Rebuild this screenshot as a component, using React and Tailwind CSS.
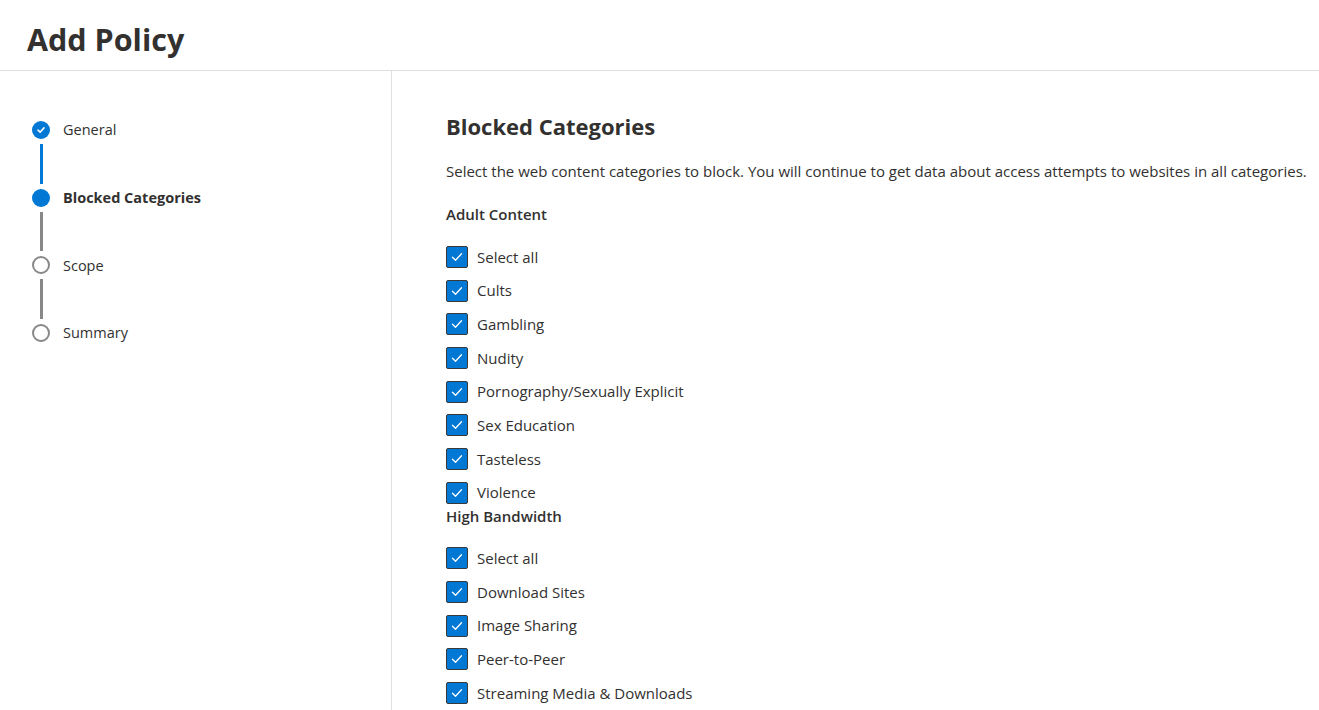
import React from "react";

const steps = [
  { label: "General", state: "done" },
  { label: "Blocked Categories", state: "current" },
  { label: "Scope", state: "todo" },
  { label: "Summary", state: "todo" },
];

const groups = [
  {
    title: "Adult Content",
    items: ["Select all", "Cults", "Gambling", "Nudity", "Pornography/Sexually Explicit", "Sex Education", "Tasteless", "Violence"],
  },
  {
    title: "High Bandwidth",
    items: ["Select all", "Download Sites", "Image Sharing", "Peer-to-Peer", "Streaming Media & Downloads"],
  },
];

function StepIcon({ state }) {
  if (state === "done") {
    return (
      <span className="flex h-[18px] w-[18px] items-center justify-center rounded-full bg-[#0078d4]">
        <svg width="10" height="10" viewBox="0 0 10 10" fill="none">
          <path d="M2 5.2 4.1 7.2 8 2.9" stroke="white" strokeWidth="1.6" strokeLinecap="round" strokeLinejoin="round" />
        </svg>
      </span>
    );
  }
  if (state === "current") {
    return <span className="block h-[18px] w-[18px] rounded-full bg-[#0078d4]" />;
  }
  return <span className="block h-[18px] w-[18px] rounded-full border-2 border-[#8a8886] bg-white" />;
}

function Stepper() {
  return (
    <div className="flex flex-col pl-[32px] pt-[50px]">
      {steps.map((s, i) => (
        <div key={s.label} className="flex flex-col">
          <div className="flex h-[18px] items-center">
            <StepIcon state={s.state} />
            <span
              className={
                "ml-[13px] text-[14.5px] text-[#323130] " + (s.state === "current" ? "font-bold" : "")
              }
            >
              {s.label}
            </span>
          </div>
          {i < steps.length - 1 && (
            <div className="flex h-[49.7px] w-[18px] justify-center py-[5px]">
              <div className={"w-[3px] " + (s.state === "done" ? "bg-[#0078d4]" : "bg-[#8a8886]")} />
            </div>
          )}
        </div>
      ))}
    </div>
  );
}

function Checkbox({ label }) {
  return (
    <label className="flex h-[33.7px] items-center">
      <span className="flex h-[22px] w-[22px] items-center justify-center rounded-[2px] border border-[#3b3a39] bg-[#0078d4]">
        <svg width="14" height="14" viewBox="0 0 14 14" fill="none">
          <path d="M2.5 7.3 5.5 10.2 11.5 3.8" stroke="white" strokeWidth="1.3" strokeLinecap="round" strokeLinejoin="round" />
        </svg>
      </span>
      <span className="ml-[9px] text-[15px] text-[#323130]">{label}</span>
    </label>
  );
}

export default function App() {
  return (
    <div className="h-[710px] overflow-hidden bg-white font-['Segoe_UI','Open_Sans',sans-serif] text-[#323130]">
      <header className="flex h-[71px] items-center border-b border-[#e1dfdd] px-[27px] pt-[8px]">
        <h1 className="text-[30.5px] font-bold leading-none text-[#323130]">Add Policy</h1>
      </header>
      <div className="flex">
        <aside className="h-[640px] w-[392px] shrink-0 border-r border-[#e1dfdd]">
          <Stepper />
        </aside>
        <main className="pl-[54px] pt-[40px]">
          <h2 className="text-[22px] font-bold leading-[30px] text-[#323130]">Blocked Categories</h2>
          <p className="mt-[20px] text-[15px] leading-[20px]">
            Select the web content categories to block. You will continue to get data about access attempts to websites in all categories.
          </p>
          {groups.map((g, gi) => (
            <div key={g.title} className={gi === 0 ? "mt-[23px]" : "-mt-[4px]"}>
              <div className="text-[15px] font-semibold leading-[20px]">{g.title}</div>
              <div className="mt-[16px] flex flex-col">
                {g.items.map((it) => (
                  <Checkbox key={it} label={it} />
                ))}
              </div>
            </div>
          ))}
        </main>
      </div>
    </div>
  );
}
